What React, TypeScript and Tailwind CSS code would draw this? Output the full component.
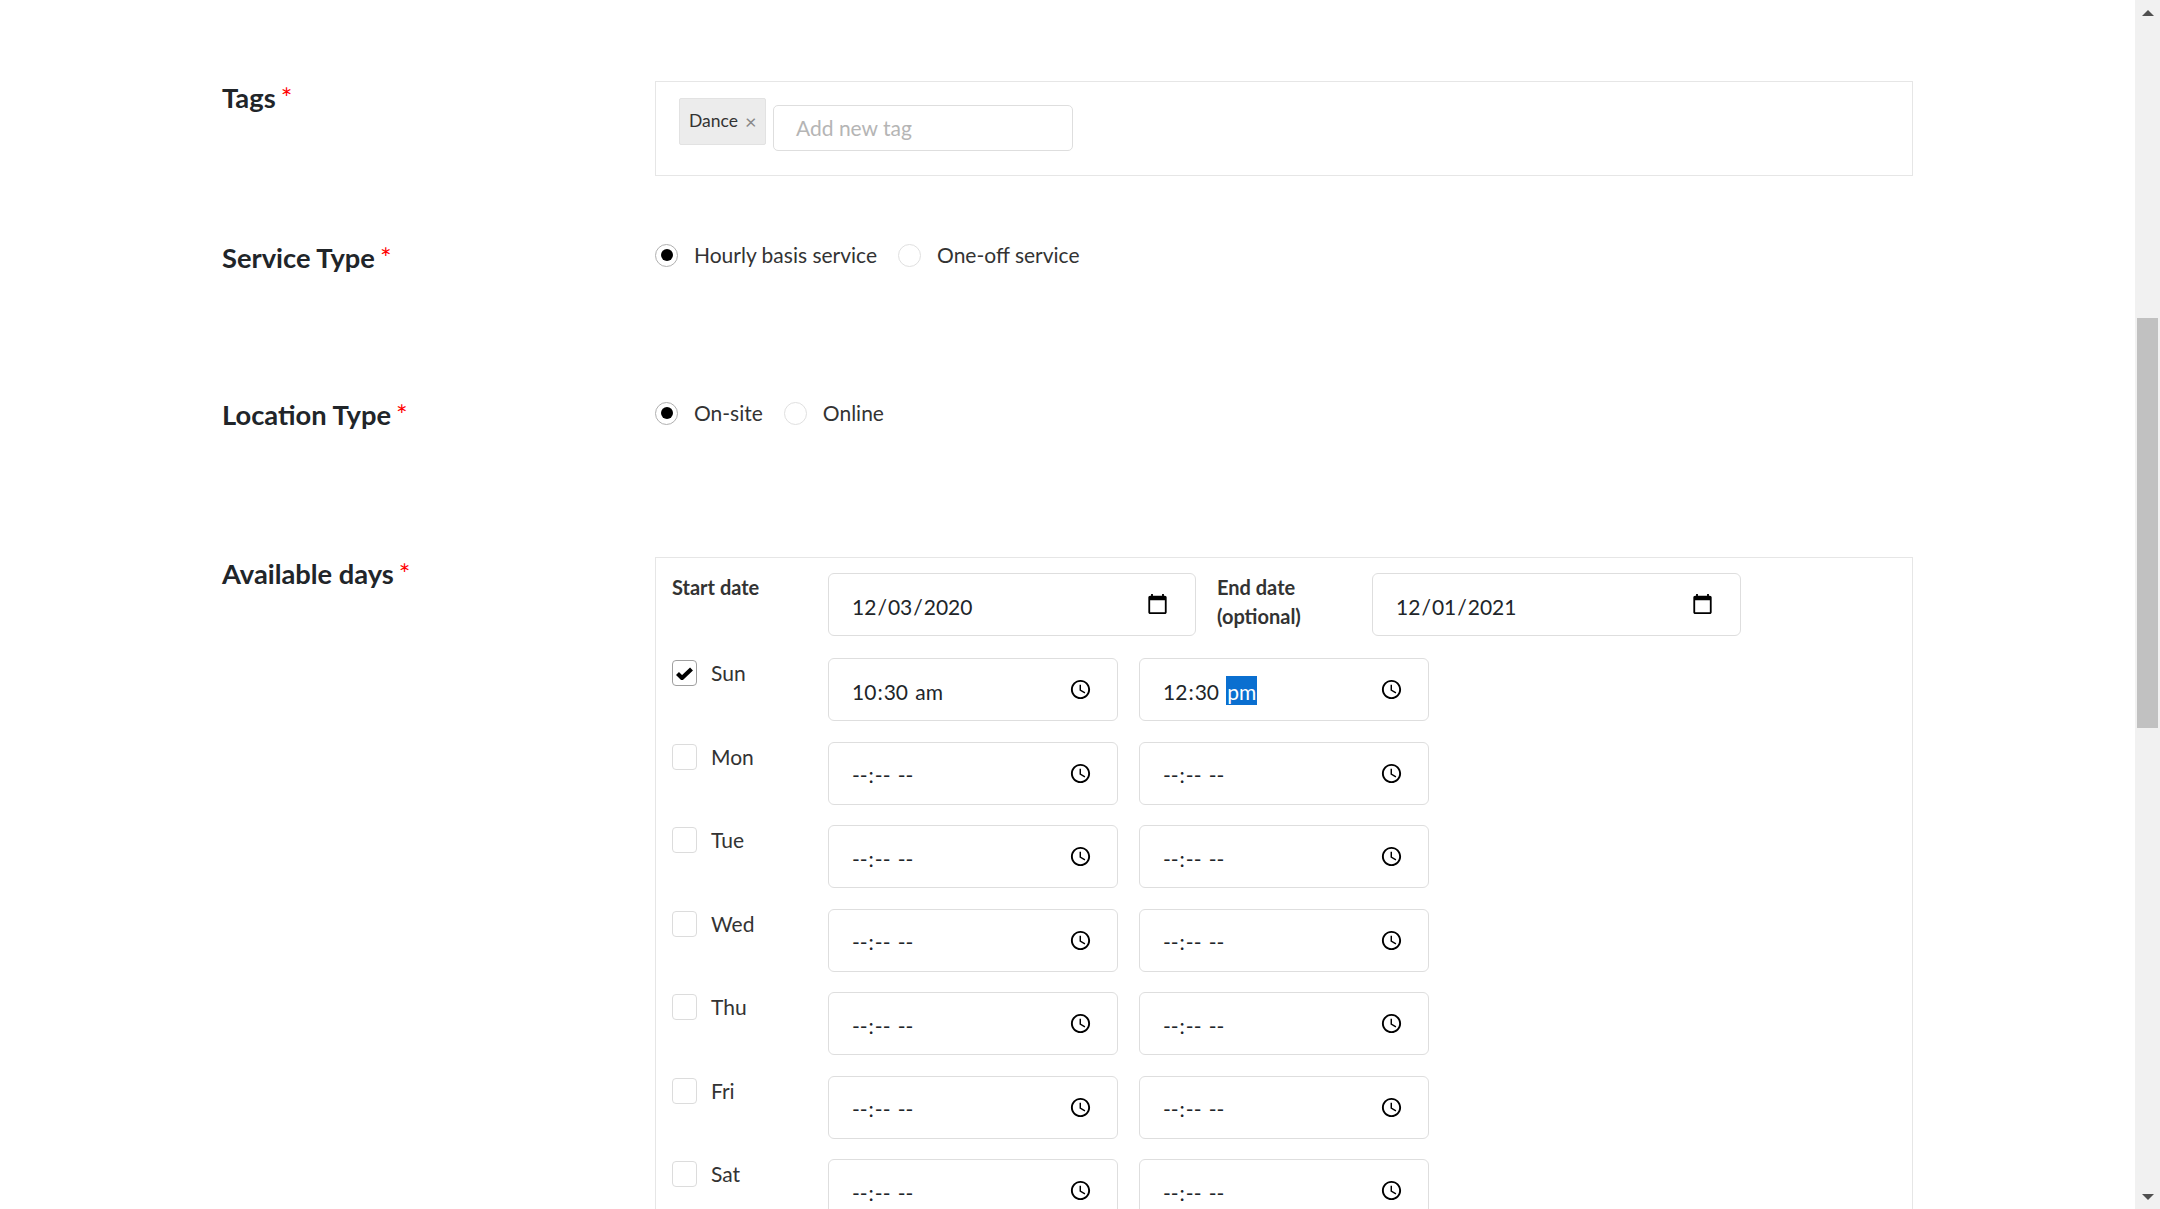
const days = ["Mon", "Tue", "Wed", "Thu", "Fri", "Sat"];

function FieldLabel({ children }: { children: string }) {
  return (
    <div className="w-[433px] shrink-0 pl-[222px] box-content text-[27.3px] leading-[34px] font-bold text-[#212529] whitespace-nowrap">
      {children}
      <span className="ml-[5px] text-[#ff0000] font-normal">*</span>
    </div>
  );
}

function Radio({ label, checked }: { label: string; checked?: boolean }) {
  return (
    <label className="flex items-center">
      <span className={`w-[23px] h-[23px] rounded-full border flex items-center justify-center ${checked ? "border-[#b0b0b0]" : "border-[#e0e0e0]"}`}>
        {checked && <span className="w-[12px] h-[12px] rounded-full bg-black" />}
      </span>
      <span className="ml-[16px] text-[21px] leading-[26px] text-[#333]">{label}</span>
    </label>
  );
}

const inputBase =
  "block h-[63px] bg-white border border-[#dedede] rounded-[6px] pl-[22px] pt-[4px] text-[21px] text-[#212529] outline-none [&::-webkit-calendar-picker-indicator]:w-[23px] [&::-webkit-calendar-picker-indicator]:h-[23px] [&::-webkit-calendar-picker-indicator]:mb-[4px] [&::-webkit-datetime-edit-ampm-field]:lowercase";

function TimeInput({ value, focused }: { value?: string; focused?: boolean }) {
  return (
    <input
      type="time"
      defaultValue={value}
      className={
        focused
          ? `${inputBase} w-[290px] pr-[22px] border-[#8fb4cf] [&::-webkit-datetime-edit-ampm-field]:bg-[#0a6fd0] [&::-webkit-datetime-edit-ampm-field]:text-white [&::-webkit-datetime-edit-ampm-field]:pt-[3px] [&::-webkit-datetime-edit-ampm-field]:ml-[1px]`
          : `${inputBase} w-[290px] pr-[22px]`
      }
    />
  );
}

function Day({ name, checked, from, to, focused }: { name: string; checked?: boolean; from?: string; to?: string; focused?: boolean }) {
  return (
    <div className="flex items-start mt-[20.5px]">
      <div className="w-[156px] pt-[2px] flex items-center">
        <span className={`w-[25px] h-[26px] rounded-[4px] border flex items-center justify-center ${checked ? "border-[#a0a0a0]" : "border-[#dcdcdc]"}`}>
          {checked && (
            <svg viewBox="0 0 17 13" className="w-[17px] h-[13px]">
              <path d="M1.5 6.5 L6 11 L15.5 2" fill="none" stroke="#000" strokeWidth="4.2" />
            </svg>
          )}
        </span>
        <span className="ml-[14px] text-[21px] leading-[26px] text-[#333]">{name}</span>
      </div>
      <TimeInput value={from} />
      <div className="ml-[21px]">
        <TimeInput value={to} focused={focused} />
      </div>
    </div>
  );
}

export default function App() {
  return (
    <div className="h-[1209px] overflow-hidden flex bg-white font-['Lato','Liberation_Sans',sans-serif]">
      <main className="flex-1 pt-[81px]">
        <section className="flex">
          <FieldLabel>Tags</FieldLabel>
          <div className="w-[1258px] h-[95px] border border-[#e6e6e6] pl-[23px] pt-[16px] flex items-start">
            <div className="w-[87px] h-[47px] pl-[9px] pt-[10px] bg-[#ececec] border border-[#e2e2e2] rounded-[2px] text-[17.5px] leading-[24px] text-[#333] flex">
              Dance <span className="ml-[7px] text-[20px] text-[#888]">×</span>
            </div>
            <div className="ml-[7px] mt-[7px] w-[300px] h-[46px] border border-[#dedede] rounded-[5px] pl-[22px] text-[21px] leading-[44px] text-[#b5b5b5]">
              Add new tag
            </div>
          </div>
        </section>

        <section className="flex mt-[65px] h-[91px]">
          <FieldLabel>Service Type</FieldLabel>
          <div className="flex items-start gap-[21px] pt-[1px]">
            <Radio label="Hourly basis service" checked />
            <Radio label="One-off service" />
          </div>
        </section>

        <section className="flex mt-[66px] h-[91px]">
          <FieldLabel>Location Type</FieldLabel>
          <div className="flex items-start gap-[21px] pt-[2px]">
            <Radio label="On-site" checked />
            <Radio label="Online" />
          </div>
        </section>

        <section className="flex mt-[68px]">
          <FieldLabel>Available days</FieldLabel>
          <div className="w-[1258px] border border-[#e6e6e6] pl-[16px] pt-[15px] pb-[40px]">
            <div className="flex items-start pb-[1.5px]">
              <div className="w-[156px] text-[20px] leading-[29px] font-bold text-[#333]">Start date</div>
              <input type="date" defaultValue="2020-12-03" className={`${inputBase} w-[368px] pr-[24px]`} />
              <div className="w-[176px] pl-[21px] text-[20px] leading-[29px] font-bold text-[#333]">
                End date
                <br />
                (optional)
              </div>
              <input type="date" defaultValue="2021-12-01" className={`${inputBase} w-[369px] pr-[24px]`} />
            </div>
            <Day name="Sun" checked from="10:30" to="12:30" focused />
            {days.map((d) => (
              <Day key={d} name={d} />
            ))}
          </div>
        </section>
      </main>

      {/* scrollbar */}
      <div className="w-[25px] bg-[#f1f1f1] flex flex-col items-center">
        <div className="h-[25px] flex items-center justify-center">
          <span className="border-x-[6px] border-x-transparent border-b-[6px] border-b-[#505050]" />
        </div>
        <div className="mt-[293px] w-[21px] h-[410px] bg-[#c1c1c1]" />
        <div className="mt-auto h-[25px] flex items-center justify-center">
          <span className="border-x-[6px] border-x-transparent border-t-[6px] border-t-[#505050]" />
        </div>
      </div>
    </div>
  );
}
